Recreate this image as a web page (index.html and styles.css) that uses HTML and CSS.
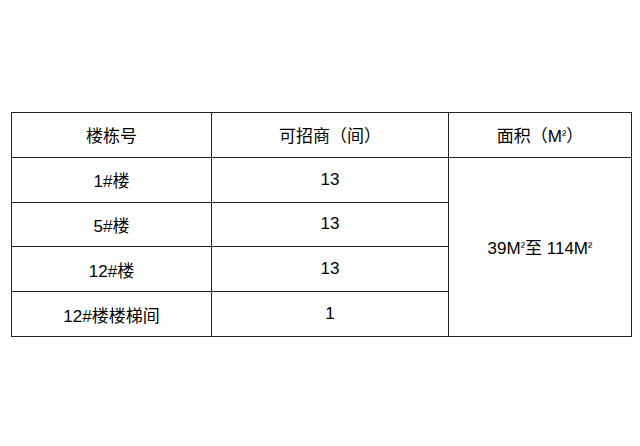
FILE: index.html
```html
<!DOCTYPE html>
<html lang="zh">
<head>
<meta charset="utf-8">
<link rel="stylesheet" href="styles.css">
</head>
<body>
<div class="page">
  <table class="grid">
    <colgroup>
      <col class="c1"><col class="c2"><col class="c3">
    </colgroup>
    <thead>
      <tr><th>楼栋号</th><th>可招商（间）</th><th>面积（M<span class="sq">²</span>）</th></tr>
    </thead>
    <tbody>
      <tr><td>1#楼</td><td>13</td><td rowspan="4">39M<span class="sq">²</span>至 114M<span class="sq">²</span></td></tr>
      <tr><td>5#楼</td><td>13</td></tr>
      <tr><td>12#楼</td><td>13</td></tr>
      <tr><td>12#楼楼梯间</td><td>1</td></tr>
    </tbody>
  </table>
</div>
</body>
</html>
```
FILE: styles.css
```css
html, body {
  margin: 0;
  padding: 0;
  background: #ffffff;
}
.page {
  width: 640px;
  height: 446px;
  padding: 112px 0 0 11px;
  box-sizing: border-box;
}
.grid {
  border-collapse: collapse;
  table-layout: fixed;
  width: 620px;
  font-family: "Liberation Sans", "Noto Sans CJK SC", sans-serif;
  font-size: 17px;
  color: #000;
}
.c1 { width: 200px; }
.c2 { width: 237px; }
.c3 { width: 183px; }
.grid th, .grid td {
  border: 1px solid #222;
  height: 44.8px;
  padding: 0;
  text-align: center;
  vertical-align: middle;
  font-weight: normal;
  box-sizing: border-box;
}
.sq {
  font-size: 13px;
  vertical-align: 3px;
}
```
